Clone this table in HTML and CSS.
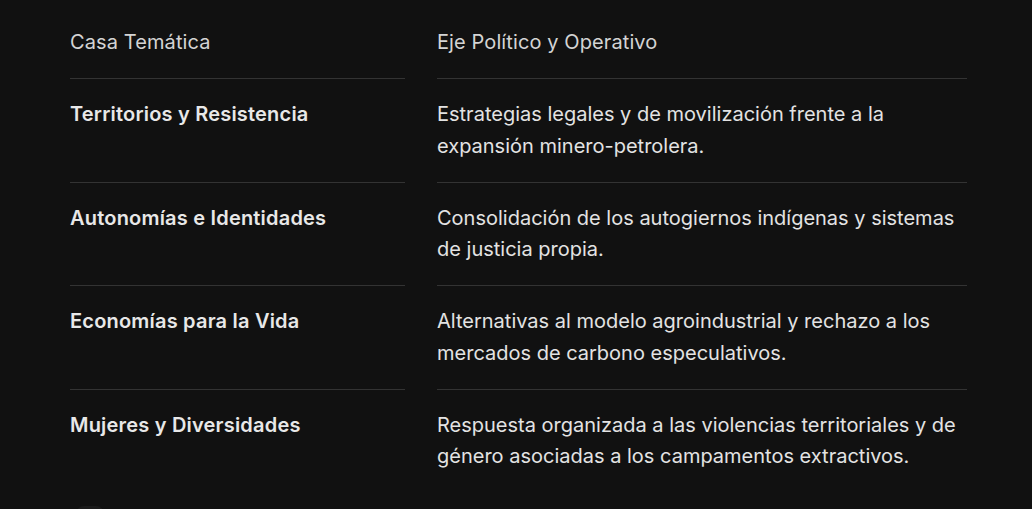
FILE: index.html
```html
<!DOCTYPE html>
<html lang="es">
<head>
  <meta charset="UTF-8">
  <title>Casas Temáticas</title>
  <link rel="stylesheet" href="styles.css">
</head>
<body>
  <div class="table">
    <div class="row head">
      <div class="cell">Casa Temática</div>
      <div class="cell">Eje Político y Operativo</div>
    </div>
    <div class="row">
      <div class="cell name">Territorios y Resistencia</div>
      <div class="cell">Estrategias legales y de movilización frente a la expansión minero-petrolera.</div>
    </div>
    <div class="row">
      <div class="cell name">Autonomías e Identidades</div>
      <div class="cell">Consolidación de los autogiernos indígenas y sistemas de justicia propia.</div>
    </div>
    <div class="row">
      <div class="cell name">Economías para la Vida</div>
      <div class="cell">Alternativas al modelo agroindustrial y rechazo a los mercados de carbono especulativos.</div>
    </div>
    <div class="row last">
      <div class="cell name">Mujeres y Diversidades</div>
      <div class="cell">Respuesta organizada a las violencias territoriales y de género asociadas a los campamentos extractivos.</div>
    </div>
  </div>
  <div class="next-chip"></div>
</body>
</html>
```

FILE: styles.css
```css
body {
  margin: 0;
  background: #111111;
  color: #e3e3e3;
  font-family: Inter, 'Noto Sans', sans-serif;
  font-size: 20px;
  padding: 7px 0 0 70px;
  height: 502px;
  overflow: hidden;
}
.table {
  width: 897px;
}
.row {
  display: grid;
  grid-template-columns: 335px 530px;
  column-gap: 32px;
}
.cell {
  padding: 20px 0;
  line-height: 31.3px;
  border-bottom: 1px solid #333333;
}
.head .cell {
  color: #d4d4d4;
  letter-spacing: 0.1px;
}
.name {
  font-weight: 600;
  color: #e8e8e8;
  letter-spacing: 0.2px;
}
.last .cell {
  border-bottom: none;
}
.next-chip {
  margin: 13px 0 0 6px;
  width: 28px;
  height: 28px;
  border-radius: 8px;
  background: #1b1b1b;
}
```
